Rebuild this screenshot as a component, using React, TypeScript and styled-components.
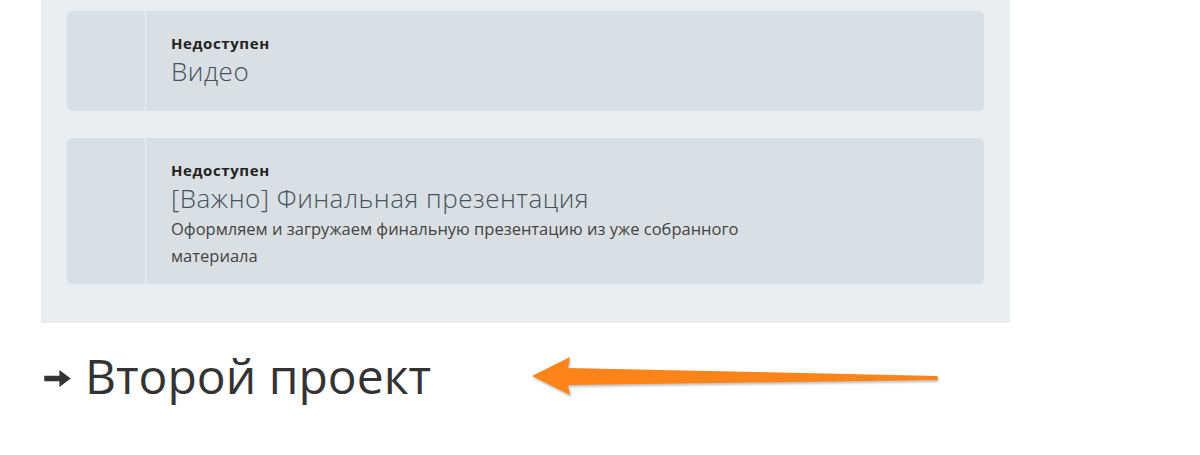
import styled, {createGlobalStyle} from "styled-components";

const GlobalStyle = createGlobalStyle`
	body{
		margin:0;
		background:#fff;
		font-family:"Open Sans", "Liberation Sans", sans-serif;
	}
`;
const Page = styled.div`
	position: relative;
	width: 1200px;
	height: 455px;
	overflow: hidden;
	padding-left: 41px;
	box-sizing: border-box;
`;
const Panel = styled.section`
	width: 969px;
	box-sizing: border-box;
	background: #eaeef0;
	padding: 11px 26px 39px;
	display: flex;
	flex-direction: column;
	gap: 27px;
`;
const Card = styled.div<{$height: number}>`
	display: flex;
	height: ${p=>p.$height}px;
	background: #dadfe3;
	border-radius: 5px;
`;
const Side = styled.div`
	width: 78px;
	flex-shrink: 0;
	border-right: 1px solid #eef1f3;
`;
const Body = styled.div`
	padding: 22px 25px 0;
	display: flex;
	flex-direction: column;
`;
const Status = styled.span`
	font-size: 15px;
	line-height: 21px;
	font-weight: 700;
	letter-spacing: 0.6px;
	color: #222;
`;
const Title = styled.span`
	font-size: 26px;
	line-height: 34px;
	font-weight: 300;
	color: #46535f;
	letter-spacing: 0.5px;
`;
const Desc = styled.p`
	margin: 0;
	max-width: 620px;
	font-size: 16.5px;
	line-height: 27px;
	color: #444;
`;
const Heading = styled.h2`
	margin: 23px 0 0 3px;
	display: flex;
	align-items: center;
	gap: 14px;
	font-size: 48px;
	font-weight: 400;
	line-height: 60px;
	color: #333;
	svg{
		margin-top: 4px;
	}
`;
const Pointer = styled.svg`
	position: absolute;
	left: 525px;
	top: 350px;
	filter: drop-shadow(1px 2px 1px rgba(0,0,0,0.25));
`;

function Lesson({title, desc, height}:{title:string; desc?:string; height:number}){
	return (
		<Card $height={height}>
			<Side/>
			<Body>
				<Status>Недоступен</Status>
				<Title>{title}</Title>
				{desc && <Desc>{desc}</Desc>}
			</Body>
		</Card>
	);
}

function App(){
	return (
		<Page>
			<GlobalStyle/>
			<Panel>
				<Lesson title="Видео" height={100}/>
				<Lesson title="[Важно] Финальная презентация" desc="Оформляем и загружаем финальную презентацию из уже собранного материала" height={146}/>
			</Panel>
			<Heading>
				<svg width="27" height="17" viewBox="0 0 28 18">
					<path d="M0 6h16V0l12 9-12 9v-6H0z" fill="#333"/>
				</svg>
				Второй проект
			</Heading>
			<Pointer width="420" height="52" viewBox="0 0 420 52">
				<path d="M7 26 L45 7 L43 18 L412 26 Q414 28 412 30 L43 35 L45 45 Z" fill="#fd8419"/>
			</Pointer>
		</Page>
	);
}
export default App;
